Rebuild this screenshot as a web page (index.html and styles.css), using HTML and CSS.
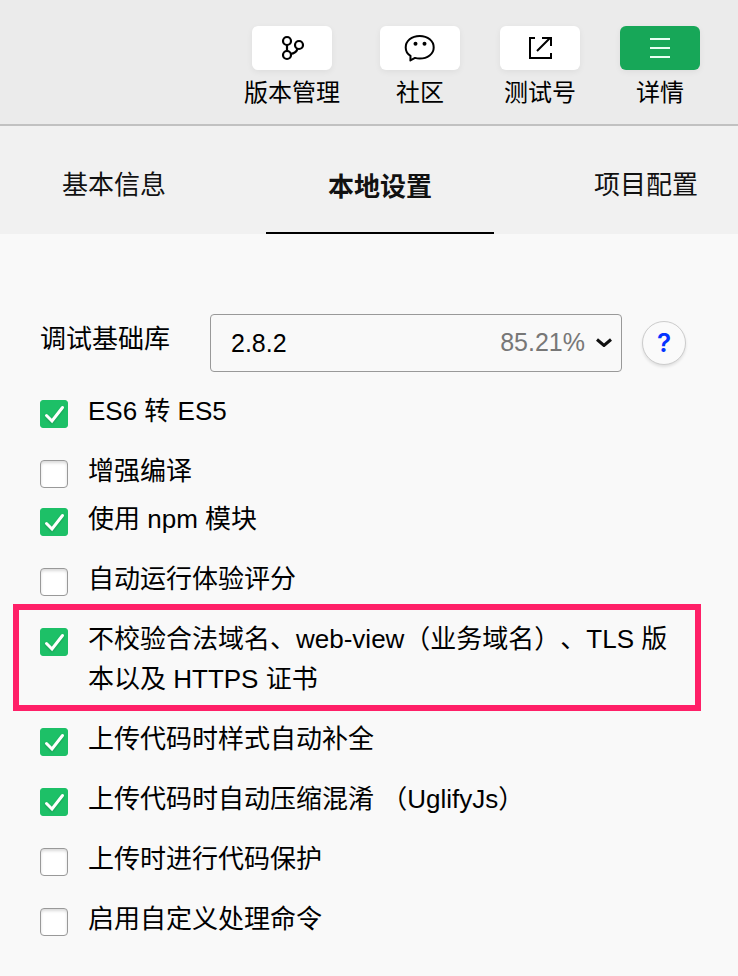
FILE: index.html
```html
<!DOCTYPE html>
<html lang="zh-CN">
<head>
<meta charset="utf-8">
<meta name="viewport" content="width=device-width, initial-scale=1">
<title>本地设置</title>
<link rel="stylesheet" href="styles.css">
</head>
<body>
<header class="toolbar">
  <button class="tool" type="button">
    <span class="tool-face">
      <svg width="26" height="26" viewBox="0 0 26 26" fill="none" stroke="#000" stroke-width="2.200">
        <circle cx="8" cy="6" r="4"/><circle cx="20" cy="10" r="4"/><circle cx="8" cy="20" r="4"/>
        <path d="M8 10v6M18.500 14c-1 2.500-3.500 4.500-7 5"/>
      </svg>
    </span>
    <span class="tool-label">版本管理</span>
  </button>
  <button class="tool" type="button">
    <span class="tool-face">
      <svg width="32" height="28" viewBox="0 0 32 28">
        <path d="M6.500 21.800C3 19.800 1.700 17 1.700 13.500 1.700 7 7.500 2 15.700 2s14 5 14 11.500S23.500 24.500 15.700 24.500c-1.700 0-3.200-.2-4.700-.6L6.400 26.400z" fill="none" stroke="#000" stroke-width="2" stroke-linejoin="round"/>
        <circle cx="11.500" cy="9.800" r="2"/><circle cx="20.500" cy="9.800" r="2"/>
      </svg>
    </span>
    <span class="tool-label">社区</span>
  </button>
  <button class="tool" type="button">
    <span class="tool-face">
      <svg width="24" height="24" viewBox="0 0 24 24" fill="none" stroke="#000" stroke-width="2">
        <path d="M7 2H2v20h21v-5M9 15 22 2M14 2h9v8"/>
      </svg>
    </span>
    <span class="tool-label">测试号</span>
  </button>
  <button class="tool tool-active" type="button">
    <span class="tool-face">
      <svg width="20" height="20" viewBox="0 0 20 20" stroke="#e6fff2" stroke-width="2">
        <path d="M0 1h20M0 10h20M0 19h20"/>
      </svg>
    </span>
    <span class="tool-label">详情</span>
  </button>
</header>

<nav class="tabs-bar">
  <div class="tabs">
    <button class="tab" type="button">基本信息</button>
    <button class="tab tab-current" type="button" aria-current="page">本地设置</button>
    <button class="tab" type="button">项目配置</button>
  </div>
</nav>

<main class="settings">
  <div class="library">
    <label class="library-label" for="library">调试基础库</label>
    <div class="library-field">
      <select id="library" class="library-select"><option>2.8.2</option></select>
      <span class="library-share">85.21%
        <svg width="16" height="10" viewBox="0 0 16 10" fill="none" stroke="#111" stroke-width="3"><path d="M1 2.500 8 8.500 15 2.500"/></svg>
      </span>
    </div>
    <button class="help" type="button">?</button>
  </div>

  <div class="options">
    <label class="option"><span class="box"><input type="checkbox" checked><svg viewBox="0 0 28 28"><path d="M6.500 15.500 12 21 22.500 7.500"/></svg></span><span>ES6 转 ES5</span></label>
    <label class="option option-tight"><span class="box"><input type="checkbox"></span><span>增强编译</span></label>
    <label class="option"><span class="box"><input type="checkbox" checked><svg viewBox="0 0 28 28"><path d="M6.500 15.500 12 21 22.500 7.500"/></svg></span><span>使用 npm 模块</span></label>
    <label class="option"><span class="box"><input type="checkbox"></span><span>自动运行体验评分</span></label>
    <label class="option option-marked"><span class="box"><input type="checkbox" checked><svg viewBox="0 0 28 28"><path d="M6.500 15.500 12 21 22.500 7.500"/></svg></span><span>不校验合法域名、web-view（业务域名）、TLS 版本以及 HTTPS 证书</span></label>
    <label class="option"><span class="box"><input type="checkbox" checked><svg viewBox="0 0 28 28"><path d="M6.500 15.500 12 21 22.500 7.500"/></svg></span><span>上传代码时样式自动补全</span></label>
    <label class="option"><span class="box"><input type="checkbox" checked><svg viewBox="0 0 28 28"><path d="M6.500 15.500 12 21 22.500 7.500"/></svg></span><span>上传代码时自动压缩混淆 （UglifyJs）</span></label>
    <label class="option"><span class="box"><input type="checkbox"></span><span>上传时进行代码保护</span></label>
    <label class="option"><span class="box"><input type="checkbox"></span><span>启用自定义处理命令</span></label>
  </div>
</main>
</body>
</html>
```
FILE: styles.css
```css
* {
  box-sizing: border-box;
}

body {
  margin: 0;
  background: #f9f9f9;
  color: #000;
  font-family: "Liberation Sans", "Noto Sans CJK SC", sans-serif;
  font-size: 26px;
  line-height: 40px;
  text-spacing-trim: space-all;
}

button,
select {
  margin: 0;
  padding: 0;
  border: 0;
  background: none;
  color: inherit;
  font: inherit;
}

.toolbar {
  display: flex;
  justify-content: flex-end;
  gap: 40px;
  padding: 26px 38px 14px;
  background: #ebebeb;
  border-bottom: 2px solid #c1c1c1;
}

.tool {
  display: flex;
  flex-direction: column;
  align-items: center;
  gap: 6px;
}

.tool-face {
  display: flex;
  align-items: center;
  justify-content: center;
  width: 80px;
  height: 44px;
  border-radius: 6px;
  background: #fff;
  box-shadow: 0 2px 6px rgba(0, 0, 0, 0.06);
}

.tool-active .tool-face {
  background: #17a758;
}

.tool-label {
  font-size: 24px;
  line-height: 34px;
}

.tabs-bar {
  overflow: hidden;
  background: #f1f1f1;
}

/* The tab strip runs slightly past the right edge of the panel. */
.tabs {
  display: grid;
  grid-template-columns: repeat(3, 1fr);
  gap: 38px;
  margin-right: -22px;
}

.tab {
  padding: 39px 0 27px;
  border-bottom: 2px solid transparent;
  color: #111;
}

.tab-current {
  padding: 41px 0 25px;
  border-bottom-color: #000;
  font-weight: bold;
}

.settings {
  padding: 80px 52px 38px 40px;
}

.library {
  display: flex;
  align-items: center;
  margin-bottom: 19px;
}

.library-label {
  flex: none;
  width: 170px;
  padding-bottom: 8px;
}

.library-field {
  position: relative;
  flex: 1;
}

.library-select {
  display: block;
  width: 100%;
  height: 58px;
  padding: 0 20px;
  border: 1px solid #999;
  border-radius: 4px;
  appearance: none;
  font-size: 25px;
}

.library-share {
  position: absolute;
  top: 8px;
  right: 10px;
  display: flex;
  align-items: center;
  gap: 11px;
  color: #777;
  font-size: 25px;
  pointer-events: none;
}

.help {
  flex: none;
  width: 44px;
  height: 44px;
  margin-left: 20px;
  border: 1px solid #ccc;
  border-radius: 50%;
  background: #fafafa;
  box-shadow: 0 2px 3px rgba(0, 0, 0, 0.1);
  color: #0433ff;
  font-family: Inter, sans-serif;
  font-weight: 600;
}

.options {
  display: flex;
  flex-direction: column;
  gap: 20px;
}

.option {
  position: relative;
  display: flex;
  align-items: flex-start;
  gap: 20px;
}

.option-tight {
  margin-bottom: -12px;
}

.option-marked::after {
  content: "";
  position: absolute;
  inset: -15px -15px -12px -27px;
  border: 6px solid #ff2068;
  pointer-events: none;
}

.box {
  flex: none;
  display: grid;
  margin-top: 9px;
}

.box input,
.box svg {
  grid-area: 1 / 1;
  width: 28px;
  height: 28px;
}

.box input {
  margin: 0;
  border: 1px solid #999;
  border-radius: 4px;
  appearance: none;
  background: #fff;
  box-shadow: inset 0 2px 3px rgba(0, 0, 0, 0.15);
}

.box input:checked {
  border-color: #1dc067;
  border-radius: 3px;
  background: #1dc067;
  box-shadow: none;
}

.box svg {
  fill: none;
  stroke: #fff;
  stroke-width: 3;
  stroke-linecap: round;
  pointer-events: none;
  filter: drop-shadow(0 1px 1px rgba(0, 0, 0, 0.2));
}
```
